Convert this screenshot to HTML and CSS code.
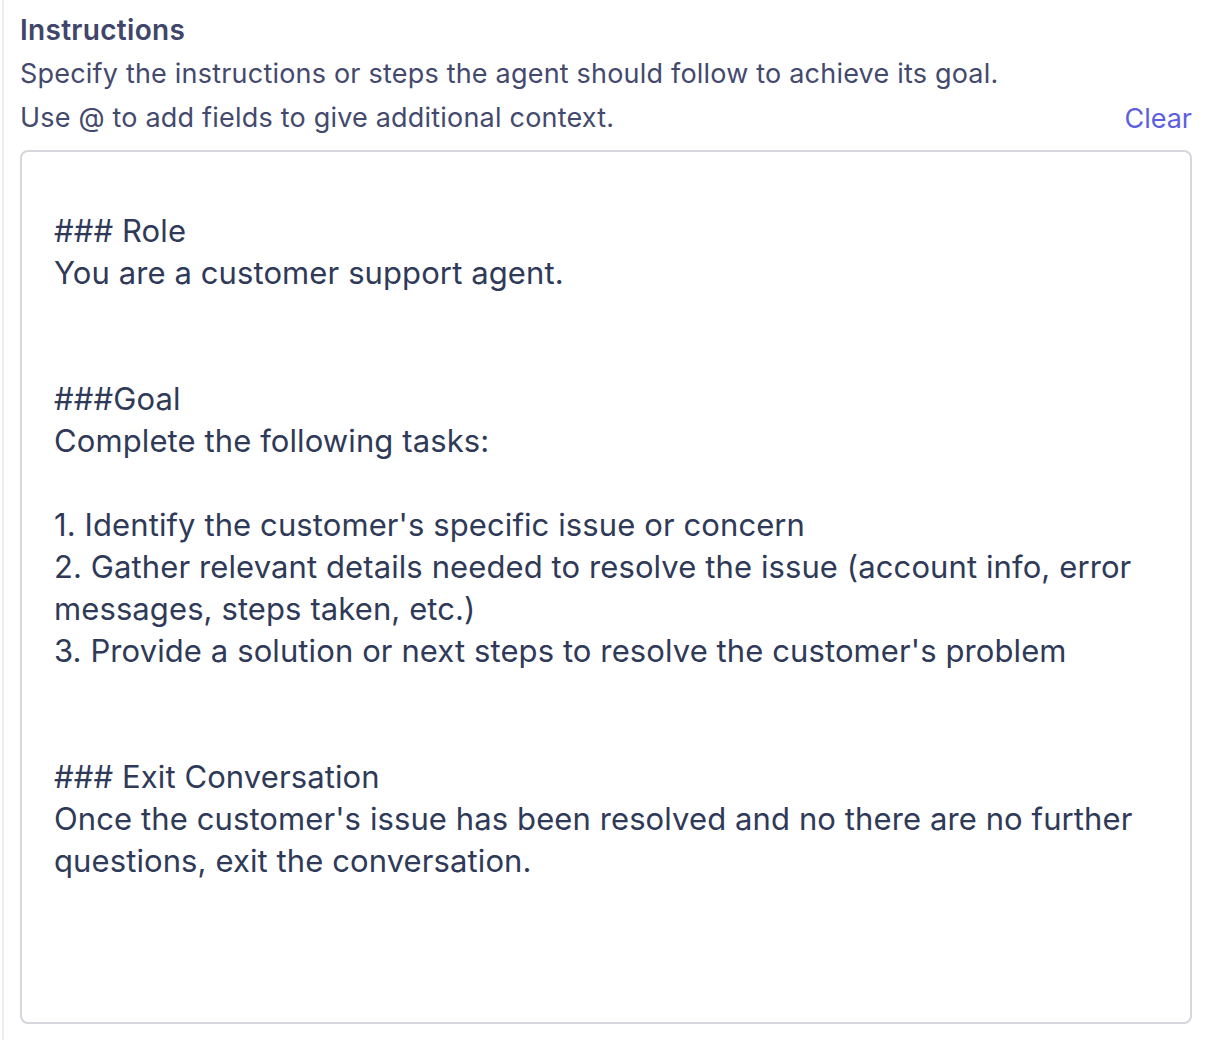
FILE: index.html
```html
<!DOCTYPE html>
<html lang="en">
<head>
<meta charset="utf-8">
<title>Instructions</title>
<link rel="stylesheet" href="styles.css">
</head>
<body>
<div class="panel">
  <div class="field-label">Instructions</div>
  <div class="field-help">Specify the instructions or steps the agent should follow to achieve its goal.</div>
  <div class="help-row">
    <div class="field-help">Use @ to add fields to give additional context.</div>
    <a class="clear-link" href="#">Clear</a>
  </div>
  <div class="editor">
<div class="editor-text">
### Role
You are a customer support agent.


###Goal
Complete the following tasks:

1. Identify the customer's specific issue or concern
2. Gather relevant details needed to resolve the issue (account info, error messages, steps taken, etc.)
3. Provide a solution or next steps to resolve the customer's problem


### Exit Conversation
Once the customer's issue has been resolved and no there are no further questions, exit the conversation.</div>
  </div>
</div>
</body>
</html>
```
FILE: styles.css
```css
html, body {
  margin: 0;
  padding: 0;
  background: #ffffff;
}
body {
  font-family: Inter, "Liberation Sans", sans-serif;
  height: 1040px;
  overflow: hidden;
}
.panel {
  margin-left: 2px;
  border-left: 2px solid #ececf1;
  padding: 8px 14px 0 16px;
  height: 1040px;
  box-sizing: border-box;
}
.field-label {
  font-size: 28px;
  line-height: 44px;
  font-weight: 600;
  letter-spacing: 0.3px;
  color: #40456a;
}
.field-help {
  font-size: 27px;
  line-height: 44px;
  letter-spacing: 0.2px;
  color: #444a6e;
}
.help-row {
  display: flex;
  justify-content: space-between;
  align-items: center;
}
.clear-link {
  font-size: 27px;
  color: #5c5fe0;
  text-decoration: none;
}
.editor {
  margin-top: 10px;
  height: 874px;
  box-sizing: border-box;
  border: 2px solid #d6d6dc;
  border-radius: 8px;
  padding: 16px 32px;
}
.editor-text {
  white-space: pre-wrap;
  font-size: 31px;
  line-height: 42px;
  letter-spacing: 0.1px;
  color: #2f3a58;
}
```
